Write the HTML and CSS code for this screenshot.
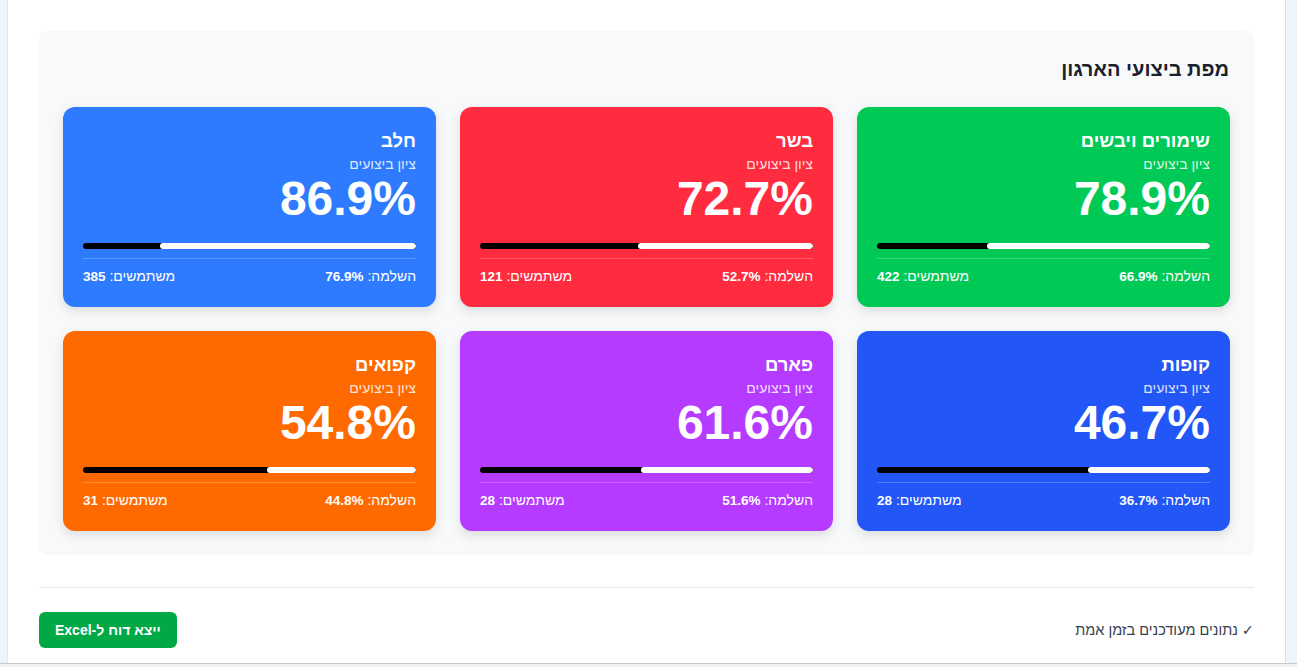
FILE: index.html
```html
<!DOCTYPE html>
<html lang="he" dir="rtl">
<head>
<meta charset="utf-8">
<title>מפת ביצועי הארגון</title>
<link rel="stylesheet" href="styles.css">
</head>
<body>
<div class="page">
  <section class="map">
    <h2 class="map-title">מפת ביצועי הארגון</h2>
    <div class="grid">
      <div class="card green">
        <div class="card-name">שימורים ויבשים</div>
        <div class="card-sub">ציון ביצועים</div>
        <div class="card-score">78.9%</div>
        <div class="bar"><div class="bar-fill" style="width:66.9%"></div></div>
        <div class="card-foot"><span>השלמה: <b>66.9%</b></span><span>משתמשים: <b>422</b></span></div>
      </div>
      <div class="card red">
        <div class="card-name">בשר</div>
        <div class="card-sub">ציון ביצועים</div>
        <div class="card-score">72.7%</div>
        <div class="bar"><div class="bar-fill" style="width:52.7%"></div></div>
        <div class="card-foot"><span>השלמה: <b>52.7%</b></span><span>משתמשים: <b>121</b></span></div>
      </div>
      <div class="card blue">
        <div class="card-name">חלב</div>
        <div class="card-sub">ציון ביצועים</div>
        <div class="card-score">86.9%</div>
        <div class="bar"><div class="bar-fill" style="width:76.9%"></div></div>
        <div class="card-foot"><span>השלמה: <b>76.9%</b></span><span>משתמשים: <b>385</b></span></div>
      </div>
      <div class="card royal">
        <div class="card-name">קופות</div>
        <div class="card-sub">ציון ביצועים</div>
        <div class="card-score">46.7%</div>
        <div class="bar"><div class="bar-fill" style="width:36.7%"></div></div>
        <div class="card-foot"><span>השלמה: <b>36.7%</b></span><span>משתמשים: <b>28</b></span></div>
      </div>
      <div class="card purple">
        <div class="card-name">פארם</div>
        <div class="card-sub">ציון ביצועים</div>
        <div class="card-score">61.6%</div>
        <div class="bar"><div class="bar-fill" style="width:51.6%"></div></div>
        <div class="card-foot"><span>השלמה: <b>51.6%</b></span><span>משתמשים: <b>28</b></span></div>
      </div>
      <div class="card orange">
        <div class="card-name">קפואים</div>
        <div class="card-sub">ציון ביצועים</div>
        <div class="card-score">54.8%</div>
        <div class="bar"><div class="bar-fill" style="width:44.8%"></div></div>
        <div class="card-foot"><span>השלמה: <b>44.8%</b></span><span>משתמשים: <b>31</b></span></div>
      </div>
    </div>
  </section>
  <div class="footer">
    <span class="live">✓ נתונים מעודכנים בזמן אמת</span>
    <button class="export">ייצא דוח ל-Excel</button>
  </div>
</div>
<div class="bottom-line"></div>
</body>
</html>
```
FILE: styles.css
```css
* { box-sizing: border-box; }
html, body { margin: 0; padding: 0; }
body {
  background: #eef4fb;
  font-family: "Liberation Sans", Arial, "DejaVu Sans", sans-serif;
  overflow: hidden;
}
.page {
  margin: 0 11px 0 7px;
  height: 663px;
  background: #fff;
  border-left: 1px solid #e3e8ee;
  border-right: 1px solid #dcdfe3;
  padding: 31px 31px 0;
}
.map {
  background: #f8f9fb;
  border-radius: 8px;
  padding: 24px;
}
.map-title {
  margin: 0 0 24px;
  font-size: 20px;
  line-height: 28px;
  font-weight: 700;
  color: #1a202c;
  padding-right: 1px;
}
.grid {
  display: grid;
  grid-template-columns: repeat(3, 1fr);
  gap: 24px;
}
.card {
  height: 200px;
  border-radius: 12px;
  padding: 20px 20px 0;
  color: #fff;
  box-shadow: 0 4px 12px rgba(0, 0, 0, 0.12);
}
.green { background: #00c955; }
.red { background: #ff2b3f; }
.blue { background: #2f7bff; }
.royal { background: #2356f6; }
.purple { background: #b43bff; }
.orange { background: #ff6a00; }
.card-name {
  font-size: 18.5px;
  line-height: 27px;
  font-weight: 700;
}
.card-sub {
  font-size: 14px;
  line-height: 21px;
  color: rgba(255, 255, 255, 0.85);
}
.card-score {
  font-size: 48px;
  line-height: 48px;
  font-weight: 700;
}
.bar {
  margin-top: 20px;
  height: 6px;
  border-radius: 3px;
  background: #000;
  overflow: hidden;
}
.bar-fill {
  height: 100%;
  background: #fff;
  border-radius: 3px;
}
.card-foot {
  margin-top: 9px;
  border-top: 1px solid rgba(255, 255, 255, 0.22);
  padding-top: 7px;
  display: flex;
  justify-content: space-between;
  font-size: 14px;
  line-height: 20px;
}
.card-foot b { font-weight: 700; font-size: 13.5px; }
.footer {
  margin-top: 32px;
  border-top: 1px solid #e5e7eb;
  padding-top: 24px;
  display: flex;
  justify-content: space-between;
  align-items: center;
}
.live {
  font-size: 14.5px;
  color: #374151;
}
.export {
  font-family: inherit;
  background: #00a846;
  color: #fff;
  border: none;
  border-radius: 6px;
  height: 36px;
  padding: 0 16px;
  font-size: 14px;
  font-weight: 700;
  cursor: pointer;
}
.bottom-line {
  height: 4px;
  border-top: 1px solid #c9c9c9;
  background: #f2f2f2;
}
```
